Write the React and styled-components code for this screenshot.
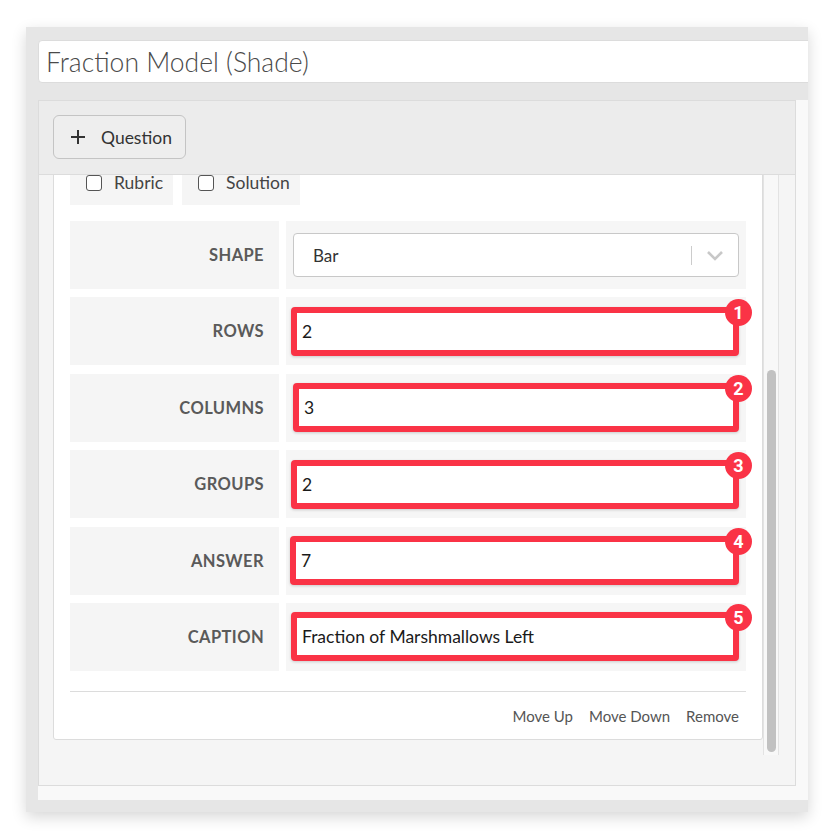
import React, { useEffect, useRef } from 'react';
import styled, { createGlobalStyle } from 'styled-components';

const GlobalStyle = createGlobalStyle`
  body {
    margin: 0;
    background: #ffffff;
    font-family: "Lato", "Liberation Sans", sans-serif;
  }
  * { box-sizing: border-box; }
`;

const Page = styled.div`
  padding: 27px 26px 0 26px;
  width: 834px;
  height: 839px;
`;

const Frame = styled.div`
  width: 782px;
  height: 785px;
  background: #e6e6e6;
  padding: 13px 0 12px 12px;
  overflow: hidden;
  box-shadow: 0 5px 14px rgba(0, 0, 0, 0.16);
  display: flex;
  flex-direction: column;
  gap: 17px;
`;

const TitleInput = styled.div`
  width: calc(100% + 20px);
  height: 43px;
  flex: none;
  background: #ffffff;
  border: 1px solid #dcdcdc;
  border-radius: 4px;
  padding: 0 7px;
  display: flex;
  align-items: center;
  font-family: "Lato", "Liberation Sans", sans-serif;
  font-weight: 300;
  font-size: 26.5px;
  color: #4a4a4a;
`;

const Holder = styled.div`
  flex: 1;
  min-height: 0;
  background: #f9f9f9;
  padding: 0 12px 14px 0;
  display: flex;
`;

const Panel = styled.div`
  flex: 1;
  min-height: 0;
  border: 1px solid #dcdcdc;
  background: #f5f5f5;
  display: flex;
  flex-direction: column;
`;

const PanelHeader = styled.div`
  flex: none;
  background: #ececec;
  border-bottom: 1px solid #dcdcdc;
  padding: 14px 14px 15px;
`;

const AddButton = styled.button`
  height: 44px;
  width: 133px;
  padding: 0 0 0 17px;
  background: #eeeeee;
  border: 1px solid #c4c4c4;
  border-radius: 6px;
  display: flex;
  align-items: center;
  gap: 16px;
  font-family: inherit;
  font-size: 17.5px;
  color: #333;
`;

const PanelBody = styled.div`
  flex: 1;
  min-height: 0;
  padding: 0 16px 30px 14px;
  display: flex;
`;

const Scroller = styled.div`
  flex: 1;
  min-height: 0;
  overflow: hidden;
  padding-bottom: 15px;
`;

const Track = styled.div`
  width: 16px;
  flex: none;
  background: #f8f8f8;
  border-left: 1px solid #e3e3e3;
  border-right: 1px solid #e3e3e3;
  display: flex;
  flex-direction: column;
  justify-content: flex-end;
  align-items: center;
  padding: 0 1px 3px 2px;
`;

const Thumb = styled.div`
  width: 9px;
  height: 382px;
  border-radius: 5px;
  background: #c1c1c1;
`;

const Card = styled.div`
  background: #ffffff;
  border: 1px solid #dcdcdc;
  border-radius: 3px;
  padding: 16px 16px 0;
`;

const Stem = styled.div`
  height: 226px;
  border: 1px solid #e2e2e2;
  border-radius: 4px;
  background: #fbfbfb;
  padding: 14px;
  font-size: 16px;
  color: #777;
  margin-bottom: 16px;
`;

const ToggleRow = styled.div`
  display: flex;
  gap: 9px;
  margin-bottom: 16px;
`;

const Toggle = styled.label`
  background: #f5f5f5;
  height: 45px;
  padding: 0 10px 0 16px;
  display: flex;
  align-items: center;
  gap: 12px;
  font-size: 17.5px;
  color: #444;
`;

const Box = styled.span`
  width: 16px;
  height: 16px;
  border: 1.5px solid #555;
  border-radius: 3px;
  background: #fff;
`;

const Form = styled.div`
  display: grid;
  grid-template-columns: 209px 1fr;
  grid-auto-rows: 68px;
  column-gap: 7px;
  row-gap: 8.4px;
`;

const Label = styled.div`
  background: #f5f5f5;
  display: flex;
  align-items: center;
  justify-content: flex-end;
  padding-right: 15px;
  font-size: 16.5px;
  font-weight: 700;
  letter-spacing: 0.4px;
  color: #5a5a5a;
`;

const Cell = styled.div`
  background: #f6f6f6;
  display: flex;
  align-items: center;
  padding: 0 7px 0 ${(p) => p.$left || 7}px;
`;

const Select = styled.div`
  flex: 1;
  height: 44px;
  background: #fff;
  border: 1px solid #c8c8c8;
  border-radius: 4px;
  display: flex;
  align-items: center;
  padding-left: 19px;
  font-size: 17px;
  color: #333;
`;

const SelectValue = styled.span`
  flex: 1;
`;

const Divider = styled.span`
  width: 1px;
  height: 19px;
  background: #cccccc;
`;

const Chevron = styled.span`
  width: 46px;
  display: flex;
  justify-content: center;
`;

const Marked = styled.div`
  position: relative;
  flex: 1;
  height: 49px;
  border: 6px solid #fa3346;
  border-radius: 4px;
  background: #fff;
  box-shadow: 0 1px 3px rgba(0, 0, 0, 0.18);
  display: flex;
  align-items: center;
  padding-left: 5px;
  font-size: 17.5px;
  color: #1a1a1a;
`;

const Badge = styled.span`
  position: absolute;
  top: -14px;
  right: -19px;
  width: 27px;
  height: 27px;
  border-radius: 50%;
  background: #fa3346;
  color: #fff;
  font-family: "Roboto", "Liberation Sans", sans-serif;
  font-weight: 700;
  font-size: 18px;
  display: flex;
  align-items: center;
  justify-content: center;
`;

const Footer = styled.div`
  margin-top: 20px;
  border-top: 1px solid #dcdcdc;
  height: 48px;
  display: flex;
  align-items: center;
  justify-content: flex-end;
  gap: 16px;
  padding: 2px 7px 0 0;
`;

const FooterLink = styled.span`
  font-size: 15px;
  color: #555;
`;

const fields = [
  { label: 'ROWS', value: '2', left: 5 },
  { label: 'COLUMNS', value: '3', left: 7 },
  { label: 'GROUPS', value: '2', left: 5 },
  { label: 'ANSWER', value: '7', left: 4 },
  { label: 'CAPTION', value: 'Fraction of Marshmallows Left', left: 5 },
];

export default function App() {
  const scroller = useRef(null);

  useEffect(() => {
    if (scroller.current) scroller.current.scrollTop = 10000;
  }, []);

  return (
    <>
      <GlobalStyle />
      <Page>
        <Frame>
          <TitleInput>Fraction Model (Shade)</TitleInput>
          <Holder>
            <Panel>
              <PanelHeader>
                <AddButton>
                  <svg width="14" height="14" viewBox="0 0 14 14">
                    <path d="M7 0v14M0 7h14" stroke="#333" strokeWidth="2" />
                  </svg>
                  Question
                </AddButton>
              </PanelHeader>
              <PanelBody>
                <Scroller ref={scroller}>
                  <Card>
                    <Stem>Question prompt</Stem>
                    <ToggleRow>
                      <Toggle><Box />Rubric</Toggle>
                      <Toggle><Box />Solution</Toggle>
                    </ToggleRow>
                    <Form>
                      <Label>SHAPE</Label>
                      <Cell>
                        <Select>
                          <SelectValue>Bar</SelectValue>
                          <Divider />
                          <Chevron>
                            <svg width="18" height="11" viewBox="0 0 18 11">
                              <path d="M2 2l7 7 7-7" fill="none" stroke="#c8c8c8" strokeWidth="2.6" />
                            </svg>
                          </Chevron>
                        </Select>
                      </Cell>
                      {fields.map((f, i) => (
                        <React.Fragment key={f.label}>
                          <Label>{f.label}</Label>
                          <Cell $left={f.left}>
                            <Marked>
                              {f.value}
                              <Badge>{i + 1}</Badge>
                            </Marked>
                          </Cell>
                        </React.Fragment>
                      ))}
                    </Form>
                    <Footer>
                      <FooterLink>Move Up</FooterLink>
                      <FooterLink>Move Down</FooterLink>
                      <FooterLink>Remove</FooterLink>
                    </Footer>
                  </Card>
                </Scroller>
                <Track>
                  <Thumb />
                </Track>
              </PanelBody>
            </Panel>
          </Holder>
        </Frame>
      </Page>
    </>
  );
}
